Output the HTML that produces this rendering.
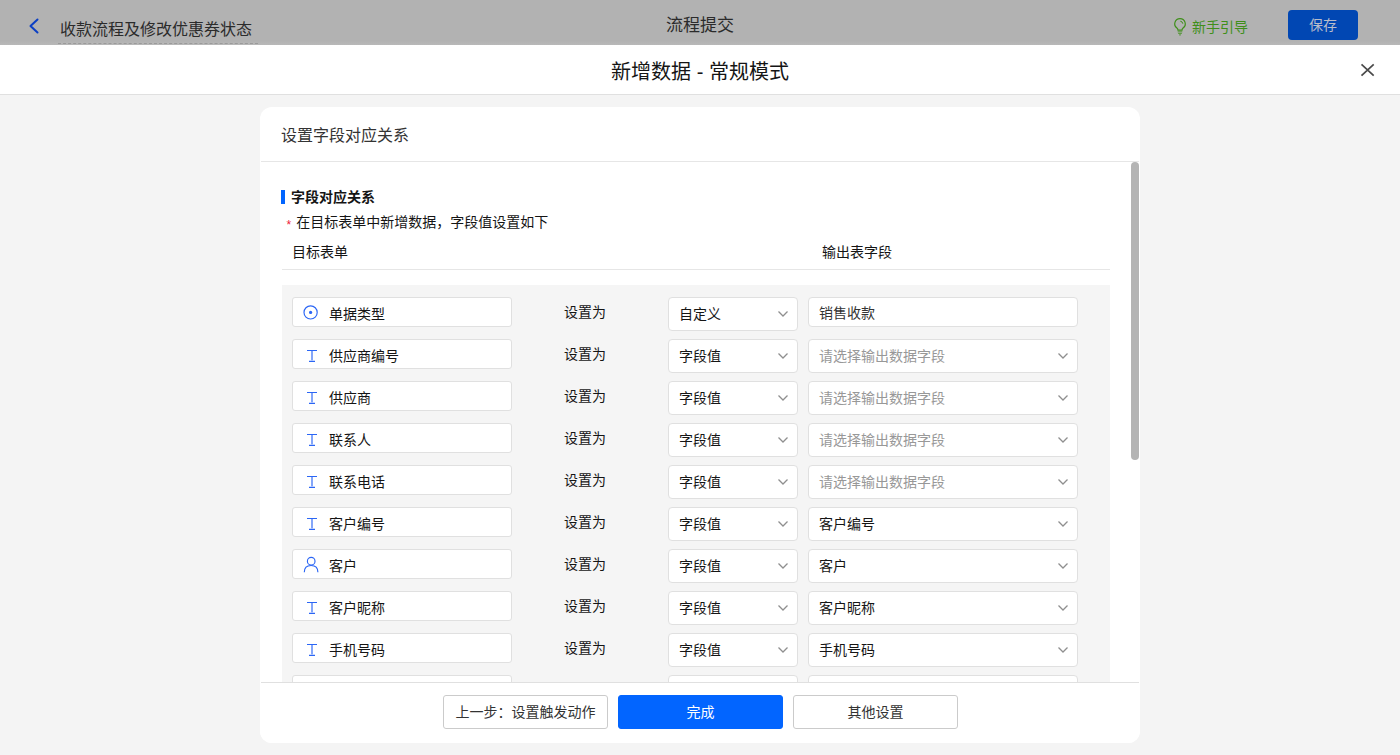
<!DOCTYPE html>
<html lang="zh-CN">
<head>
<meta charset="utf-8">
<title>新增数据 - 常规模式</title>
<style>
*{box-sizing:border-box;margin:0;padding:0}
html,body{width:1400px;height:755px;overflow:hidden;background:#f4f4f4}
body{font-family:"Liberation Sans","Noto Sans CJK SC",sans-serif;font-size:14px;color:#151515;position:relative;line-height:1}
.abs{position:absolute}
/* dimmed top bar */
.topbar{position:absolute;left:0;top:0;width:1400px;height:45px;background:linear-gradient(#b2b2b2 0,#b2b2b2 41px,#b8b8b8 45px)}
.topbar .back{position:absolute;left:27px;top:16.5px;width:14px;height:18px}
.topbar .name{position:absolute;left:58px;top:14px;width:200px;height:30px;padding:1px 0 0 2px;font-size:16px;line-height:30px;color:#2b2b2b;border-bottom:1px dashed #9a9a9a;white-space:nowrap}
.topbar .step{position:absolute;left:0;width:1400px;top:11px;text-align:center;font-size:17px;line-height:30px;color:#2b2b2b}
.topbar .guide{position:absolute;left:1172px;top:12px;height:30px;line-height:30px;font-size:14px;color:#3f8f1a;white-space:nowrap}
.topbar .guide svg{position:absolute;left:0;top:5px}
.topbar .guide span{margin-left:20px}
.topbar .save{position:absolute;left:1288px;top:10px;width:70px;height:30px;border-radius:4px;background:#0147b3;color:#b8bdca;font-size:14px;line-height:30px;text-align:center}
/* modal header */
.mhead{position:absolute;left:0;top:45px;width:1400px;height:50px;background:#fff;border-bottom:1px solid #e0e0e0}
.mhead h1{font-weight:400;font-size:20px;line-height:50px;text-align:center;color:#151515;margin-top:2px}
.mhead .close{position:absolute;left:1360px;top:18px;width:15px;height:14px}
/* card */
.card{position:absolute;left:260px;top:107px;width:880px;height:636px;background:#fff;border-radius:12px;overflow:hidden}
.card .chead::after{content:"";position:absolute;left:1px;right:1px;bottom:0;height:1px;background:#e6e6e6}
.card .chead{position:absolute;left:0;top:0;width:880px;height:55px;padding-left:21px;font-size:16px;line-height:58px;color:#333}
.scroll{position:absolute;left:0;top:55px;width:880px;height:520px;overflow:hidden}
.thumb{position:absolute;left:871px;top:0;width:8px;height:298px;border-radius:4px;background:#b4b4b4}
.sect{position:absolute;left:21px;top:28px;height:14px;border-left:4px solid #0265ff;padding-left:6px;font-size:14px;font-weight:700;line-height:14px;color:#151515;white-space:nowrap}
.tip{position:absolute;left:26.500px;top:50px;font-size:14px;line-height:20px;color:#151515;white-space:nowrap}
.tip i{font-style:normal;color:#ee1a3a;font-size:12px;margin-right:5px;position:relative;top:2px}
.th{position:absolute;top:80px;font-size:14px;line-height:20px;color:#151515}
.hline{position:absolute;left:22px;top:107px;width:828px;height:1px;background:#e6e6e6}
.panel{position:absolute;left:22px;top:123px;width:828px;height:500px;background:#f5f5f5}
.row{position:absolute;left:0;width:828px;height:42px}
.field{position:absolute;left:10px;top:0;width:220px;height:30px;background:#fff;border:1px solid #e0e0e0;border-radius:3px;line-height:30px;padding:1px 0 0 36px;font-size:14px;color:#151515;white-space:nowrap}
.field svg{position:absolute;left:-1px;top:-1px}
.setto{position:absolute;left:282px;top:5px;font-size:14px;line-height:20px;color:#151515}
.sel{position:absolute;top:0;height:34px;background:#fff;border:1px solid #e0e0e0;border-radius:4px;line-height:32px;padding-left:10px;font-size:14px;color:#151515;white-space:nowrap}
.sel.t{left:386px;width:130px}
.sel.o{left:526px;width:270px}
.sel.ph{color:#989898}
.sel svg{position:absolute;right:8px;top:12px}
.inp{position:absolute;left:526px;top:0;width:270px;height:30px;background:#fff;border:1px solid #e0e0e0;border-radius:4px;line-height:28px;padding:1px 0 0 10px;font-size:14px;color:#333}
/* footer */
.foot{position:absolute;left:0;top:575px;width:880px;height:61px;background:#fff}
.foot::before{content:"";position:absolute;left:1px;right:1px;top:0;height:1px;background:#e0e0e0}
.btn{position:absolute;top:13px;width:165px;height:34px;border-radius:3px;font-size:14px;line-height:32px;text-align:center;border:1px solid #cbcbcb;background:#fff;color:#333}
.btn.pri{background:#0265ff;border-color:#0265ff;color:#fff}
</style>
</head>
<body>
<div class="topbar">
  <svg class="back" viewBox="0 0 14 18"><path d="M10.5 2.5 L3.5 9 L10.5 15.5" fill="none" stroke="#0b3fc4" stroke-width="2" stroke-linecap="round" stroke-linejoin="round"/></svg>
  <div class="name">收款流程及修改优惠券状态</div>
  <div class="step">流程提交</div>
  <div class="guide"><svg width="16" height="20" viewBox="0 0 16 20"><path d="M8 1.600a5.200 5.200 0 0 0-3.100 9.400c.7.600 1.100 1.300 1.100 2.200h4c0-.9.400-1.600 1.100-2.200a5.200 5.200 0 0 0-3.100-9.400z" fill="none" stroke="#3f8f1a" stroke-width="1.200"/><path d="M8.300 4.200a2.800 2.800 0 0 1 2.500 2.500" fill="none" stroke="#3f8f1a" stroke-width="1"/><path d="M5.700 14.800h4.600M6.100 16.400h3.800M7 17.900h2" stroke="#3f8f1a" stroke-width="0.800" fill="none"/></svg><span>新手引导</span></div>
  <div class="save">保存</div>
</div>
<div class="mhead">
  <h1>新增数据 - 常规模式</h1>
  <svg class="close" viewBox="0 0 15 14"><path d="M1.500 1.300 L13.700 12.700 M13.700 1.300 L1.500 12.700" stroke="#4a4a4a" stroke-width="1.700" fill="none"/></svg>
</div>
<div class="card">
  <div class="chead">设置字段对应关系</div>
  <div class="scroll">
    <div class="sect">字段对应关系</div>
    <div class="tip"><i>*</i>在目标表单中新增数据，字段值设置如下</div>
    <div class="th" style="left:32px">目标表单</div>
    <div class="th" style="left:562px">输出表字段</div>
    <div class="hline"></div>
    <div class="panel" id="panel">
<div class="row" style="top:12px"><div class="field"><svg width="40" height="30" viewBox="0 0 40 30"><circle cx="18.600" cy="15.400" r="6.600" fill="none" stroke="#2b66f5" stroke-width="1.150"/><circle cx="18.600" cy="15.400" r="1.600" fill="#2b66f5"/></svg>单据类型</div><div class="setto">设置为</div><div class="sel t">自定义<svg width="12" height="8" viewBox="0 0 12 8"><path d="M1.500 1.500 L6 6 L10.500 1.500" fill="none" stroke="#8f8f8f" stroke-width="1.300"/></svg></div><div class="inp">销售收款</div></div>
<div class="row" style="top:54px"><div class="field"><svg width="40" height="30" viewBox="0 0 40 30"><path d="M15 11.500h10M20 11.500v9.800M17 22.400h6" fill="none" stroke="#2b66f5" stroke-width="1.150"/></svg>供应商编号</div><div class="setto">设置为</div><div class="sel t">字段值<svg width="12" height="8" viewBox="0 0 12 8"><path d="M1.500 1.500 L6 6 L10.500 1.500" fill="none" stroke="#8f8f8f" stroke-width="1.300"/></svg></div><div class="sel o ph">请选择输出数据字段<svg width="12" height="8" viewBox="0 0 12 8"><path d="M1.500 1.500 L6 6 L10.500 1.500" fill="none" stroke="#8f8f8f" stroke-width="1.300"/></svg></div></div>
<div class="row" style="top:96px"><div class="field"><svg width="40" height="30" viewBox="0 0 40 30"><path d="M15 11.500h10M20 11.500v9.800M17 22.400h6" fill="none" stroke="#2b66f5" stroke-width="1.150"/></svg>供应商</div><div class="setto">设置为</div><div class="sel t">字段值<svg width="12" height="8" viewBox="0 0 12 8"><path d="M1.500 1.500 L6 6 L10.500 1.500" fill="none" stroke="#8f8f8f" stroke-width="1.300"/></svg></div><div class="sel o ph">请选择输出数据字段<svg width="12" height="8" viewBox="0 0 12 8"><path d="M1.500 1.500 L6 6 L10.500 1.500" fill="none" stroke="#8f8f8f" stroke-width="1.300"/></svg></div></div>
<div class="row" style="top:138px"><div class="field"><svg width="40" height="30" viewBox="0 0 40 30"><path d="M15 11.500h10M20 11.500v9.800M17 22.400h6" fill="none" stroke="#2b66f5" stroke-width="1.150"/></svg>联系人</div><div class="setto">设置为</div><div class="sel t">字段值<svg width="12" height="8" viewBox="0 0 12 8"><path d="M1.500 1.500 L6 6 L10.500 1.500" fill="none" stroke="#8f8f8f" stroke-width="1.300"/></svg></div><div class="sel o ph">请选择输出数据字段<svg width="12" height="8" viewBox="0 0 12 8"><path d="M1.500 1.500 L6 6 L10.500 1.500" fill="none" stroke="#8f8f8f" stroke-width="1.300"/></svg></div></div>
<div class="row" style="top:180px"><div class="field"><svg width="40" height="30" viewBox="0 0 40 30"><path d="M15 11.500h10M20 11.500v9.800M17 22.400h6" fill="none" stroke="#2b66f5" stroke-width="1.150"/></svg>联系电话</div><div class="setto">设置为</div><div class="sel t">字段值<svg width="12" height="8" viewBox="0 0 12 8"><path d="M1.500 1.500 L6 6 L10.500 1.500" fill="none" stroke="#8f8f8f" stroke-width="1.300"/></svg></div><div class="sel o ph">请选择输出数据字段<svg width="12" height="8" viewBox="0 0 12 8"><path d="M1.500 1.500 L6 6 L10.500 1.500" fill="none" stroke="#8f8f8f" stroke-width="1.300"/></svg></div></div>
<div class="row" style="top:222px"><div class="field"><svg width="40" height="30" viewBox="0 0 40 30"><path d="M15 11.500h10M20 11.500v9.800M17 22.400h6" fill="none" stroke="#2b66f5" stroke-width="1.150"/></svg>客户编号</div><div class="setto">设置为</div><div class="sel t">字段值<svg width="12" height="8" viewBox="0 0 12 8"><path d="M1.500 1.500 L6 6 L10.500 1.500" fill="none" stroke="#8f8f8f" stroke-width="1.300"/></svg></div><div class="sel o">客户编号<svg width="12" height="8" viewBox="0 0 12 8"><path d="M1.500 1.500 L6 6 L10.500 1.500" fill="none" stroke="#8f8f8f" stroke-width="1.300"/></svg></div></div>
<div class="row" style="top:264px"><div class="field"><svg width="40" height="30" viewBox="0 0 40 30"><circle cx="19.200" cy="12.200" r="3.800" fill="none" stroke="#2b66f5" stroke-width="1.150"/><path d="M12.300 23.300C12.300 19 15.100 16.500 19.100 16.500S25.900 19 25.900 23.300" fill="none" stroke="#2b66f5" stroke-width="1.150"/></svg>客户</div><div class="setto">设置为</div><div class="sel t">字段值<svg width="12" height="8" viewBox="0 0 12 8"><path d="M1.500 1.500 L6 6 L10.500 1.500" fill="none" stroke="#8f8f8f" stroke-width="1.300"/></svg></div><div class="sel o">客户<svg width="12" height="8" viewBox="0 0 12 8"><path d="M1.500 1.500 L6 6 L10.500 1.500" fill="none" stroke="#8f8f8f" stroke-width="1.300"/></svg></div></div>
<div class="row" style="top:306px"><div class="field"><svg width="40" height="30" viewBox="0 0 40 30"><path d="M15 11.500h10M20 11.500v9.800M17 22.400h6" fill="none" stroke="#2b66f5" stroke-width="1.150"/></svg>客户昵称</div><div class="setto">设置为</div><div class="sel t">字段值<svg width="12" height="8" viewBox="0 0 12 8"><path d="M1.500 1.500 L6 6 L10.500 1.500" fill="none" stroke="#8f8f8f" stroke-width="1.300"/></svg></div><div class="sel o">客户昵称<svg width="12" height="8" viewBox="0 0 12 8"><path d="M1.500 1.500 L6 6 L10.500 1.500" fill="none" stroke="#8f8f8f" stroke-width="1.300"/></svg></div></div>
<div class="row" style="top:348px"><div class="field"><svg width="40" height="30" viewBox="0 0 40 30"><path d="M15 11.500h10M20 11.500v9.800M17 22.400h6" fill="none" stroke="#2b66f5" stroke-width="1.150"/></svg>手机号码</div><div class="setto">设置为</div><div class="sel t">字段值<svg width="12" height="8" viewBox="0 0 12 8"><path d="M1.500 1.500 L6 6 L10.500 1.500" fill="none" stroke="#8f8f8f" stroke-width="1.300"/></svg></div><div class="sel o">手机号码<svg width="12" height="8" viewBox="0 0 12 8"><path d="M1.500 1.500 L6 6 L10.500 1.500" fill="none" stroke="#8f8f8f" stroke-width="1.300"/></svg></div></div>
<div class="row" style="top:390px"><div class="field"><svg width="40" height="30" viewBox="0 0 40 30"><path d="M15 11.500h10M20 11.500v9.800M17 22.400h6" fill="none" stroke="#2b66f5" stroke-width="1.150"/></svg>收款日期</div><div class="setto">设置为</div><div class="sel t">字段值<svg width="12" height="8" viewBox="0 0 12 8"><path d="M1.500 1.500 L6 6 L10.500 1.500" fill="none" stroke="#8f8f8f" stroke-width="1.300"/></svg></div><div class="sel o">收款日期<svg width="12" height="8" viewBox="0 0 12 8"><path d="M1.500 1.500 L6 6 L10.500 1.500" fill="none" stroke="#8f8f8f" stroke-width="1.300"/></svg></div></div>
<div class="row" style="top:432px"><div class="field"><svg width="40" height="30" viewBox="0 0 40 30"><path d="M15 11.500h10M20 11.500v9.800M17 22.400h6" fill="none" stroke="#2b66f5" stroke-width="1.150"/></svg>收款金额</div><div class="setto">设置为</div><div class="sel t">字段值<svg width="12" height="8" viewBox="0 0 12 8"><path d="M1.500 1.500 L6 6 L10.500 1.500" fill="none" stroke="#8f8f8f" stroke-width="1.300"/></svg></div><div class="sel o">收款金额<svg width="12" height="8" viewBox="0 0 12 8"><path d="M1.500 1.500 L6 6 L10.500 1.500" fill="none" stroke="#8f8f8f" stroke-width="1.300"/></svg></div></div>
</div>
    <div class="thumb"></div>
  </div>
  <div class="foot">
    <div class="btn" style="left:183px">上一步：设置触发动作</div>
    <div class="btn pri" style="left:358px">完成</div>
    <div class="btn" style="left:533px">其他设置</div>
  </div>
</div>
</body>
</html>
